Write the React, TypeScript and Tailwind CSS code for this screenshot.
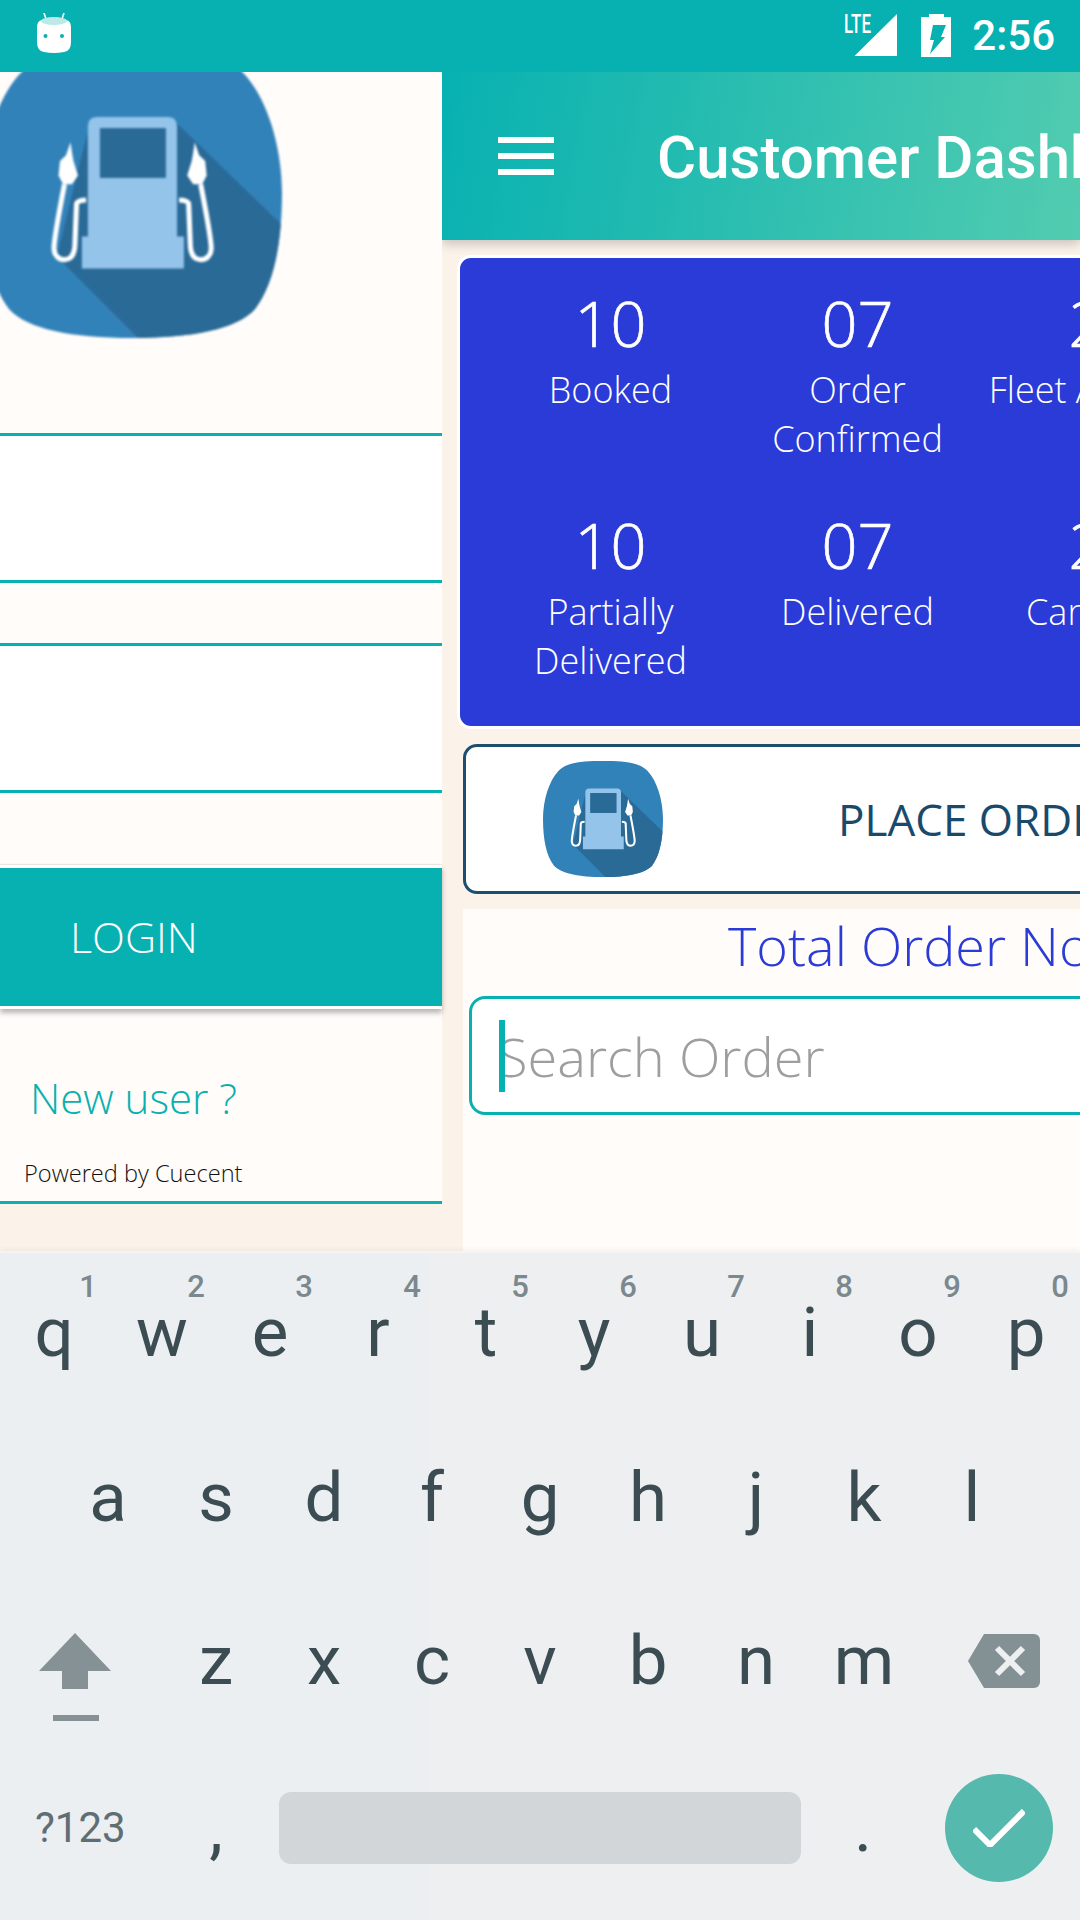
import React from "react";

function Nozzle() {
  return (
    <g>
      <path d="M29.5 32.5 L28 37 L26 39 L25.5 44 L27 47 L30 47 L32 44 L30.5 39 L30 36 Z" fill="#fff" />
      <path
        d="M27.5 47 C26 55 24 66 24 69 C24 72 26 73 27.5 73 C30 73 31 71 31 67 L31.5 54 Q31.5 52.5 34.7 52.4"
        fill="none"
        stroke="#fff"
        strokeWidth="1.7"
      />
    </g>
  );
}

const squircle =
  "M50 0 C68 0 80 1 87 8.5 C95 17 100 34 100 50 C100 68 97 82 91 90 C85 97 70 100 50 100 C30 100 15 97 9 90 C3 82 0 68 0 50 C0 34 5 17 13 8.5 C20 1 32 0 50 0Z";

function PumpLogo({ id, className }: { id: string; className: string }) {
  return (
    <svg viewBox="0 0 100 100" preserveAspectRatio="none" className={className}>
      <defs>
        <clipPath id={id}>
          <path d={squircle} />
        </clipPath>
      </defs>
      <path d={squircle} fill="#3282ba" />
      <path d="M64 25 L100 61 V100 H52 L25 72 L32 42 L35 30 Z" fill="#2a6a97" clipPath={`url(#${id})`} />
      <path
        d="M35.3 27 Q35.3 23.8 38.5 23.8 H61.8 Q65 23.8 65 27 V65 H67.3 V76 H33.3 V65 H35.3 Z"
        fill="#95c4ea"
      />
      <rect x="39.3" y="27.6" width="22" height="17.2" fill="#2a6a97" />
      <Nozzle />
      <g transform="translate(100.4 0) scale(-1 1)">
        <Nozzle />
      </g>
    </svg>
  );
}

function StatusBar() {
  return (
    <div className="flex h-[72px] shrink-0 items-center bg-[#07b1b1] pl-[37px] pr-[25px]">
      <svg viewBox="0 0 34 40" className="mb-[6px] h-[40px] w-[34px]">
        <path d="M9 6 L7 0 M25 6 L27 0" stroke="#fff" strokeWidth="1.6" />
        <path d="M5 7 Q17 2 29 7 Q34 8 34 14 V29 Q34 38 27 39 Q17 41 7 39 Q0 38 0 29 V14 Q0 8 5 7Z" fill="#fff" />
        <ellipse cx="17" cy="8" rx="13" ry="4" fill="#bdeae6" />
        <circle cx="8.5" cy="23" r="2" fill="#07b1b1" />
        <circle cx="25" cy="23" r="2" fill="#07b1b1" />
      </svg>
      <div className="ml-auto flex items-center">
        <svg viewBox="0 0 53 44" className="h-[44px] w-[53px]">
          <path d="M10.5 42 L53 0 V42 Z" fill="#fff" />
          <text
            x="0"
            y="19"
            fill="#fff"
            fontFamily="Roboto, sans-serif"
            fontSize="26"
            fontWeight="500"
            textLength="27"
            lengthAdjust="spacingAndGlyphs"
          >
            LTE
          </text>
        </svg>
        <svg viewBox="0 0 30 44" className="ml-[24px] h-[44px] w-[30px]">
          <path d="M8 0 H23 V3 H30 V43 H0 V3 H8 Z" fill="#fff" />
          <path d="M12 11 H25 L20 23 H24 L9 40 L13 26 H9 Z" fill="#07b1b1" />
        </svg>
        <span className="ml-[21px] font-['Roboto',sans-serif] text-[42px] leading-none font-medium text-white">
          2:56
        </span>
      </div>
    </div>
  );
}

function LoginPanel() {
  return (
    <div className="w-[442px] shrink-0">
      <div className="h-[361px] overflow-hidden bg-[#fffcf9]">
        <PumpLogo id="logo-big" className="-mt-[24px] -ml-[18px] h-[290px] w-[300px] blur-[0.8px]" />
      </div>
      <div className="h-[150px] border-y-[3px] border-[#07b1b1] bg-white" />
      <div className="h-[60px] bg-[#fffcf9]" />
      <div className="h-[150px] border-y-[3px] border-[#07b1b1] bg-white" />
      <div className="h-[72px] bg-[#fffcf9]" />
      <div className="relative flex h-[144px] items-center border-y-[3px] border-white bg-[#07b1b1] pb-[2px] pl-[70px] text-[43px] leading-none font-light text-white shadow-[0_4px_5px_rgba(0,0,0,0.28),0_-1px_1px_rgba(0,0,0,0.08)]">
        LOGIN
      </div>
      <div className="h-[195px] border-b-[3px] border-[#07b1b1] bg-[#fffcf9] pt-[68px]">
        <div className="pl-[30px] text-[42px] leading-none font-light text-[#07b1b1]">New user ?</div>
        <div className="mt-[43px] pl-[24px] text-[23.6px] leading-none font-light text-[#111]">Powered by Cuecent</div>
      </div>
    </div>
  );
}

const stats = [
  ["10", "Booked"],
  ["07", "Order Confirmed"],
  ["20", "Fleet Assigned"],
  ["10", "Partially Delivered"],
  ["07", "Delivered"],
  ["20", "Cancelled"],
];

function Dashboard() {
  return (
    <div className="min-w-0 flex-1 overflow-hidden">
      <div className="relative flex h-[168px] w-[638px] items-center bg-[linear-gradient(100deg,#07b1b1,#52ccb0)] pl-[56px] shadow-[0_4px_10px_rgba(0,0,0,0.2)]">
        <div className="flex w-[56px] shrink-0 flex-col gap-[10px]">
          <div className="h-[6px] bg-white" />
          <div className="h-[6px] bg-white" />
          <div className="h-[6px] bg-white" />
        </div>
        <div className="ml-[103px] pt-[3px] font-['Roboto',sans-serif] text-[60px] leading-none font-medium whitespace-nowrap text-white">
          Customer Dashboard
        </div>
      </div>

      <div className="mt-[15px] ml-[15px] grid h-[474px] w-[760px] grid-cols-[247px_247px_247px] grid-rows-[222px_222px] rounded-[14px] border-[3px] border-white bg-[#2b3bd7] pt-[31px] pl-[27px] text-center text-white">
        {stats.map(([value, label], i) => (
          <div key={i}>
            <div className="text-[63px] leading-[68px] font-light [-webkit-text-stroke:0.7px_white]">{value}</div>
            <div className="mt-[8px] text-[36px] leading-[49px] font-light">{label}</div>
          </div>
        ))}
      </div>

      <div className="mt-[15px] ml-[21px] flex h-[150px] w-[760px] items-center rounded-[14px] border-[3px] border-[#1d4e6f] bg-white pl-[77px]">
        <PumpLogo id="logo-small" className="h-[116px] w-[120px] shrink-0" />
        <span className="ml-[175px] text-[44px] leading-none font-normal whitespace-nowrap text-[#1a4a6b]">PLACE ORDER</span>
      </div>

      <div className="mt-[15px] ml-[21px] h-[342px] w-[760px] bg-[#fffcf9] pt-[9px]">
        <div className="pl-[265px] text-[54px] leading-none font-light whitespace-nowrap text-[#2b3bd7]">
          Total Order No
        </div>
        <div className="relative mt-[24px] ml-[6px] h-[119px] rounded-[16px] border-[3px] border-[#07b1b1] bg-white">
          <input
            readOnly
            placeholder="Search Order"
            className="h-full w-full bg-transparent pl-[26px] text-[54.2px] font-light outline-none placeholder:text-[#9e9e9e]"
          />
          <span className="absolute top-[21px] left-[27px] h-[72px] w-[6px] bg-[#07b1b1]" />
        </div>
      </div>
    </div>
  );
}

function Key({ label, hint }: { label: string; hint?: string }) {
  return (
    <div className="relative flex h-[165px] w-[108px] shrink-0 items-center justify-center text-[69px] leading-none text-[#3c4c53]">
      {label}
      {hint && (
        <span className="absolute top-[21px] left-[76px] w-[24px] text-center text-[31px] leading-none font-medium text-[#7b888e]">
          {hint}
        </span>
      )}
    </div>
  );
}

function Keyboard() {
  return (
    <div className="relative h-[669px] shrink-0 border-t-[2px] border-[#f3f4f6] bg-[linear-gradient(90deg,#ebeff2_428px,#eeeff1_428px)] font-['Roboto',sans-serif] shadow-[0_-3px_4px_rgba(0,0,0,0.03)]">
      <div className="-mt-[3px] flex">
        {"qwertyuiop".split("").map((k, i) => (
          <Key key={k} label={k} hint={String((i + 1) % 10)} />
        ))}
      </div>
      <div className="flex pl-[54px]">
        {"asdfghjkl".split("").map((k) => (
          <Key key={k} label={k} />
        ))}
      </div>
      <div className="-mt-[2px] flex">
        <div className="w-[162px] shrink-0 pt-[55px] pl-[39px]">
          <svg viewBox="0 0 72 88" className="h-[88px] w-[72px]">
            <path d="M36 0 L72 38 H49 V56 H23 V38 H0 Z" fill="#869195" />
            <rect x="14" y="82" width="46" height="6" fill="#869195" />
          </svg>
        </div>
        {"zxcvbnm".split("").map((k) => (
          <Key key={k} label={k} />
        ))}
        <div className="flex w-[162px] shrink-0 items-center pl-[50px]">
          <svg viewBox="0 0 72 54" className="h-[54px] w-[72px]">
            <path d="M16 0 H66 a6 6 0 0 1 6 6 V48 a6 6 0 0 1 -6 6 H16 L0 27 Z" fill="#839094" />
            <path d="M29 14 L55 40 M55 14 L29 40" stroke="#eeeff1" strokeWidth="6" />
          </svg>
        </div>
      </div>
      <div className="mt-[2px] flex h-[165px] items-center">
        <div className="w-[162px] shrink-0 pl-[35px] text-[42px] leading-none text-[#5f6e75]">?123</div>
        <div className="w-[108px] shrink-0 text-center text-[69px] leading-none text-[#3c4c53]">,</div>
        <div className="ml-[9px] h-[72px] w-[522px] shrink-0 rounded-[12px] bg-[#d2d6d9]" />
        <div className="ml-[8px] w-[108px] shrink-0 text-center text-[69px] leading-none text-[#3c4c53]">.</div>
        <div className="ml-[28px] flex h-[108px] w-[108px] shrink-0 items-center justify-center rounded-full bg-[#55b9ae]">
          <svg viewBox="0 0 52 38" className="h-[38px] w-[52px]">
            <path d="M1 20 L17 36 L51 2" fill="none" stroke="#fff" strokeWidth="6" />
          </svg>
        </div>
      </div>
    </div>
  );
}

export default function App() {
  return (
    <div className="flex h-[1920px] w-[1080px] flex-col overflow-hidden bg-[#fbf2ea] font-['Open_Sans',sans-serif]">
      <StatusBar />
      <div className="flex h-[1179px] shrink-0 overflow-hidden">
        <LoginPanel />
        <Dashboard />
      </div>
      <Keyboard />
    </div>
  );
}
